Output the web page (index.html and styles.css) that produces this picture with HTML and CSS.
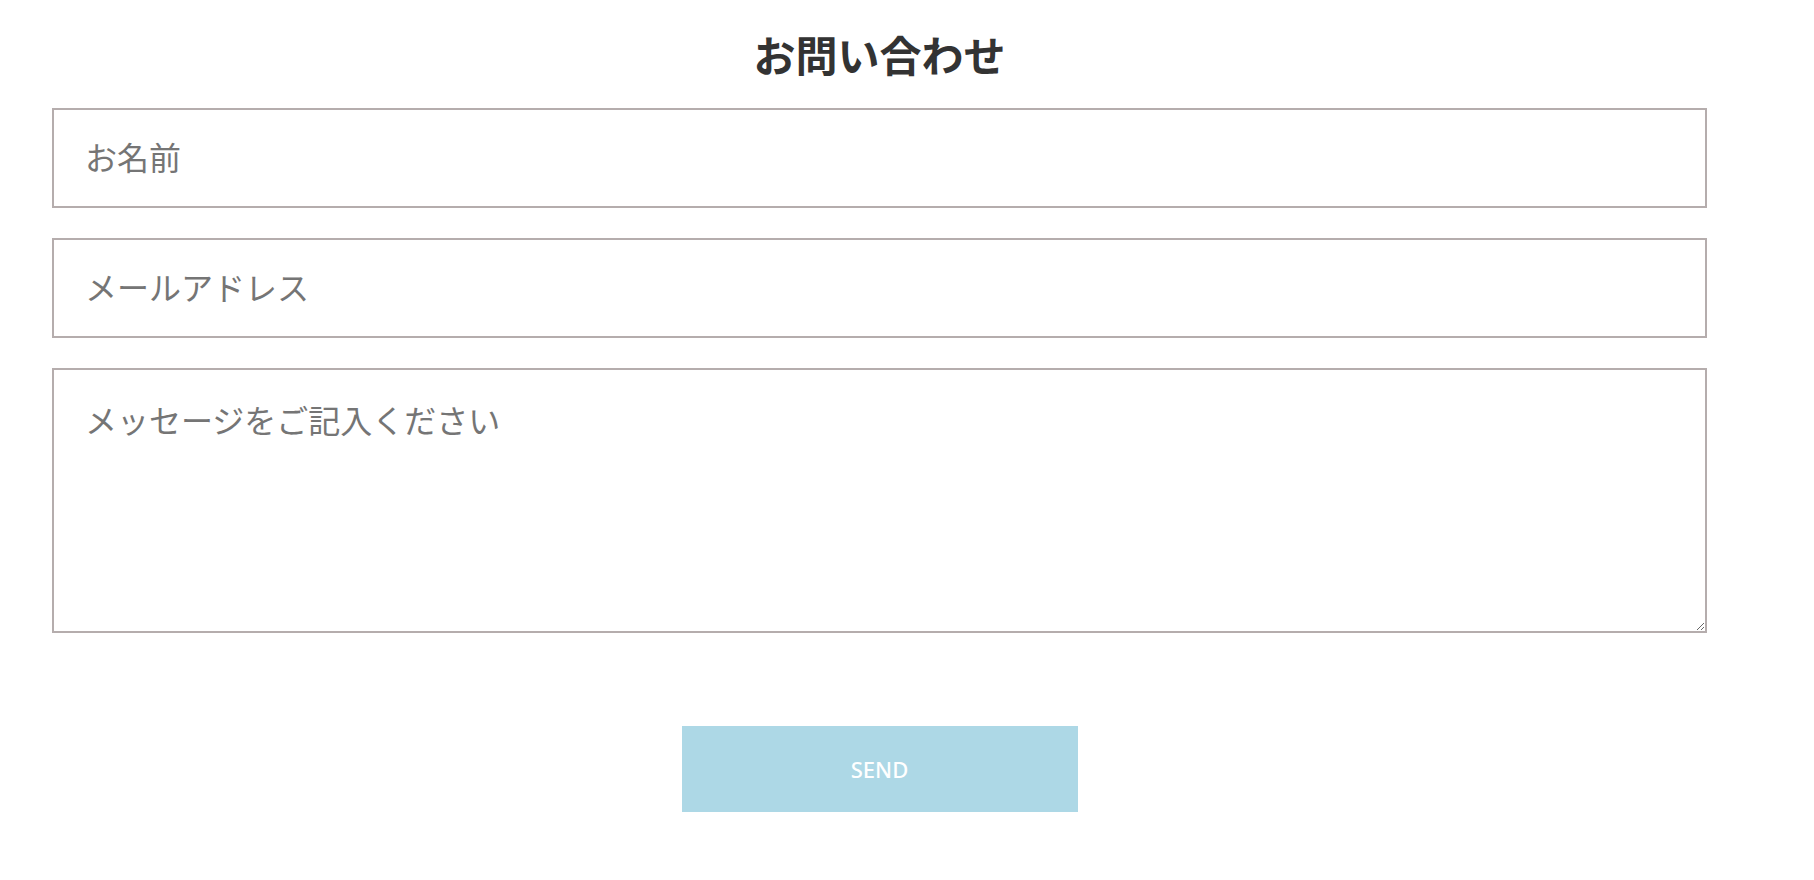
FILE: index.html
```html
<!DOCTYPE html>
<html lang="ja">
<head>
<meta charset="utf-8">
<title>お問い合わせ</title>
<link rel="stylesheet" href="styles.css">
</head>
<body>
<main class="page">
  <h2 class="title">お問い合わせ</h2>
  <form class="form">
    <input class="field" type="text" placeholder="お名前">
    <input class="field" type="email" placeholder="メールアドレス">
    <textarea class="field area" placeholder="メッセージをご記入ください"></textarea>
    <div class="actions">
      <button class="send" type="button">SEND</button>
    </div>
  </form>
</main>
</body>
</html>
```

FILE: styles.css
```css
html, body {
  margin: 0;
  padding: 0;
  background: #fff;
}
body {
  font-family: "Noto Sans CJK JP", "Noto Sans", sans-serif;
}
.page {
  width: 1760px;
  box-sizing: border-box;
  padding: 24px 53px 0 52px;
}
.title {
  margin: 0 0 24px;
  text-align: center;
  font-size: 42px;
  line-height: 60px;
  font-weight: 700;
  color: #333;
}
.form {
  display: flex;
  flex-direction: column;
  gap: 30px;
}
.field {
  display: block;
  width: 100%;
  box-sizing: border-box;
  height: 100px;
  margin: 0;
  border: 2px solid #b5adad;
  border-radius: 0;
  padding: 0 31px 4px;
  font-family: "Noto Sans CJK JP", sans-serif;
  font-size: 32px;
  color: #333;
  background: #fff;
  outline: none;
}
.field::placeholder {
  color: #757575;
}
.area {
  height: 265px;
  padding: 26px 31px;
  line-height: 1.45;
}
.actions {
  display: flex;
  justify-content: center;
  margin-top: 63px;
}
.send {
  width: 396px;
  height: 86px;
  border: none;
  border-radius: 0;
  background: #add8e6;
  color: #fff;
  font-family: "Noto Sans", sans-serif;
  font-size: 22px;
  font-weight: 500;
  cursor: pointer;
}
```
